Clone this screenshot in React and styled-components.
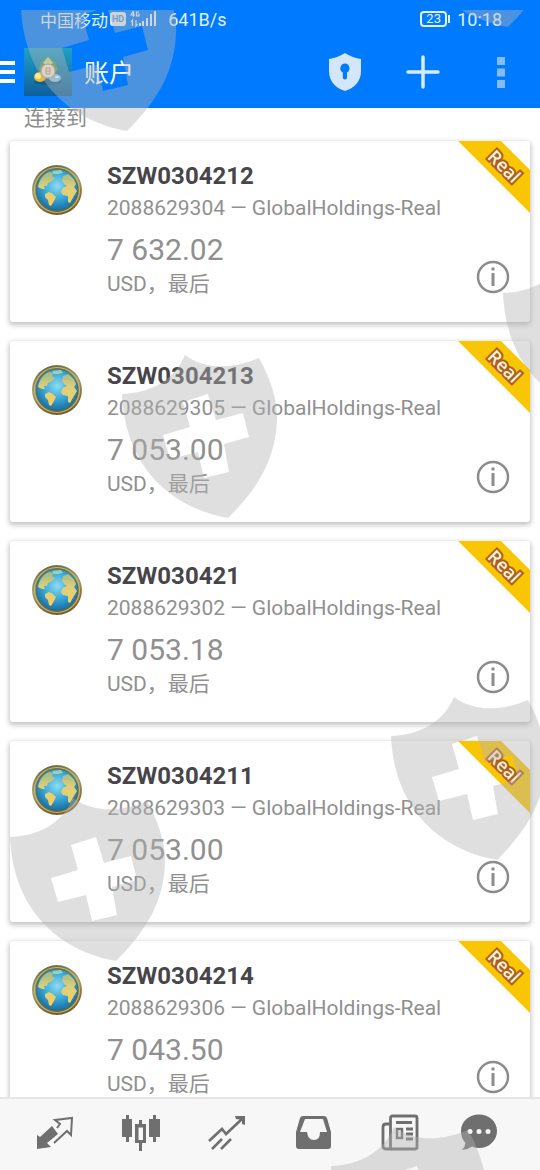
import styled, { createGlobalStyle } from "styled-components";

const GlobalStyle = createGlobalStyle`
  * {
    box-sizing: border-box;
  }
  body {
    margin: 0;
    background: #fff;
    font-family: Roboto, "Noto Sans CJK SC", sans-serif;
  }
  button {
    display: flex;
    align-items: center;
    justify-content: center;
    padding: 0;
    border: none;
    background: none;
    font: inherit;
    color: inherit;
    cursor: pointer;
  }
  svg {
    display: block;
  }
`;

const Screen = styled.div`
  position: relative;
  display: flex;
  flex-direction: column;
  height: 100vh;
  overflow: hidden;
`;

const TopBar = styled.header`
  flex: none;
  background: #007aff;
  color: #e3f0ff;
`;

const StatusBar = styled.div`
  display: flex;
  align-items: center;
  height: 38px;
  padding: 0 38px 0 40px;
  font-size: 18px;
  font-weight: 400;
`;

const Carrier = styled.span`
  font-size: 17px;
  margin-right: 2px;
`;

const HdBadge = styled.span`
  padding: 0 2px;
  margin-right: 4px;
  border-radius: 3px;
  background: #dcebfb;
  color: #4a90dc;
  font-size: 9px;
  font-weight: 700;
  line-height: 14px;
`;

const Speed = styled.span`
  margin-left: 12px;
`;

const Battery = styled.span`
  display: flex;
  align-items: center;
  margin-left: auto;
  margin-right: 7px;

  &::after {
    content: "";
    width: 2px;
    height: 8px;
    margin-left: 1px;
    background: currentColor;
  }
`;

const BatteryLevel = styled.span`
  width: 27px;
  border: 2px solid currentColor;
  border-radius: 4px;
  font-size: 13px;
  line-height: 12px;
  text-align: center;
`;

const Toolbar = styled.div`
  display: flex;
  align-items: center;
  height: 70px;
  padding: 0 19px 2px 0;
`;

const MenuButton = styled.button`
  width: 15px;
  height: 48px;
  margin-right: 9px;
`;

const Title = styled.h1`
  flex: 1;
  margin: 4px 0 0 12px;
  color: #fff;
  font-size: 25px;
  font-weight: 400;
  line-height: 32px;
`;

const Actions = styled.div`
  display: flex;
  gap: 38px;
`;

const IconButton = styled.button`
  width: 40px;
  height: 48px;
`;

const Main = styled.main`
  flex: 1;
  min-height: 0;
`;

const SectionTitle = styled.h2`
  margin: 0 24px 13px;
  color: #8d8d8d;
  font-size: 21px;
  font-weight: 400;
  line-height: 20px;
`;

const Accounts = styled.ul`
  display: flex;
  flex-direction: column;
  gap: 19px;
  margin: 0;
  padding: 0 10px;
  list-style: none;
`;

const Card = styled.li`
  position: relative;
  display: flex;
  gap: 25px;
  min-height: 181px;
  padding: 21px 20px 20px 22px;
  border-radius: 3px;
  background: #fff;
  box-shadow: 0 2px 5px 1px rgba(0, 0, 0, 0.24);
`;

const Globe = styled.svg`
  flex: none;
  width: 50px;
  height: 50px;
  margin-top: 3px;
`;

const Details = styled.div`
  flex: 1;
  color: #909090;
`;

const Name = styled.h3`
  margin: 0 0 6px;
  color: #46464a;
  font-size: 24px;
  font-weight: 700;
  line-height: 28px;
`;

const Server = styled.p`
  margin: 0 0 12px;
  font-size: 21px;
  line-height: 24px;
`;

const Balance = styled.p`
  margin: 0;
  font-size: 30px;
  line-height: 36px;
`;

const Currency = styled.p`
  margin: 0;
  font-size: 21px;
  line-height: 32px;
`;

const InfoButton = styled.button`
  align-self: flex-end;
  width: 34px;
  height: 34px;
  margin-bottom: 8px;
  color: #8c8c8c;
`;

const Ribbon = styled.div`
  position: absolute;
  top: 0;
  right: 0;
  display: flex;
  align-items: center;
  justify-content: center;
  width: 72px;
  height: 72px;
  padding: 0 0 22px 22px;
  background: #f9c606;
  clip-path: polygon(0 0, 43px 0, 100% 29px, 100% 100%);
`;

const RibbonText = styled.span`
  transform: rotate(45deg);
  color: #fff3e0;
  font-family: "Open Sans", sans-serif;
  font-size: 18px;
  font-weight: 600;
  line-height: 20px;
  -webkit-text-stroke: 4px #b0601c;
  paint-order: stroke fill;
`;

const TabBar = styled.nav`
  position: relative;
  flex: none;
  display: grid;
  grid-template-columns: repeat(6, 1fr);
  height: 73px;
  padding: 0 12px 6px;
  border-top: 2px solid #e6e6e6;
  background: #f7f7f7;
  color: #6f6f6f;
`;

const Watermarks = styled.div`
  position: absolute;
  inset: 10px 0 0;
  overflow: hidden;
  pointer-events: none;
`;

const Mark = styled.svg`
  position: absolute;
  left: ${(p) => p.$x}px;
  top: ${(p) => p.$y}px;
  width: 156px;
  height: 166px;
`;

const accounts = [
  { name: "SZW0304212", login: "2088629304", balance: "7 632.02" },
  { name: "SZW0304213", login: "2088629305", balance: "7 053.00" },
  { name: "SZW030421", login: "2088629302", balance: "7 053.18" },
  { name: "SZW0304211", login: "2088629303", balance: "7 053.00" },
  { name: "SZW0304214", login: "2088629306", balance: "7 043.50" },
];

const marks = [
  [21, -44],
  [402, -148],
  [503, 242],
  [122, 343],
  [391, 685],
  [10, 786],
  [331, 1115],
];

const tabs = [
  {
    label: "行情",
    icon: (
      <>
        <path fill="currentColor" d="M12 23V37L26 35L22 31L33 22L27 14L15 25Z" />
        <path
          fill="none"
          stroke="currentColor"
          strokeWidth="2"
          d="M32 16L35 12L30 8L47 6L46 23L42 19L29 31"
        />
      </>
    ),
  },
  {
    label: "图表",
    icon: (
      <>
        <path
          fill="currentColor"
          d="M15 3h3v4h3v18h-3v5h-3v-5h-4V7h4zM42 3h3v4h4v18h-4v5h-3v-5h-4V7h4z"
        />
        <path fill="currentColor" d="M28 8h3v4h4v19h-4v8h-3v-8h-4V12h4z" />
        <path fill="#f7f7f7" d="M27.5 15.5h4.5v12.5h-4.5z" />
      </>
    ),
  },
  {
    label: "交易",
    icon: (
      <>
        <path
          fill="none"
          stroke="currentColor"
          strokeWidth="2.6"
          d="M12 29L25 17L29 22L45 7M15 37L25 27M24 37L34 27"
        />
        <path fill="currentColor" d="M38 4H48V13L45 12V8L39 7Z" />
      </>
    ),
  },
  {
    label: "历史",
    icon: (
      <path
        fill="currentColor"
        fillRule="evenodd"
        d="M20 4H41Q43 4 44 6L48 20V34Q48 37 45 37H16Q13 37 13 34V20L17 6Q18 4 20 4ZM22 7L17 20H24Q25 28 31 28Q37 28 37 20H44L40 7Z"
      />
    ),
  },
  {
    label: "新闻",
    icon: (
      <g fill="none" stroke="currentColor" strokeWidth="2.8">
        <rect x="21.5" y="4" width="26.5" height="33" rx="2" />
        <path d="M21 12H17Q14 12 14 15V34Q14 37 17 37H23" />
        <path d="M27 10.500H43M37 17H44M37 22H44M37 27H44" />
        <rect x="28" y="17" width="5" height="9" strokeWidth="2.4" />
      </g>
    ),
  },
  {
    label: "消息",
    icon: (
      <>
        <path
          fill="currentColor"
          d="M24 2.5C34 2.5 42 9.5 42 19S34 36 24 36Q20 36 17 34.5Q12 38 7 38Q10 35 10.5 31C7.5 28 6 24 6 19C6 9.5 14 2.5 24 2.5Z"
        />
        <circle cx="15" cy="19.5" r="2.5" fill="#f7f7f7" />
        <circle cx="24" cy="19.5" r="2.5" fill="#f7f7f7" />
        <circle cx="33" cy="19.5" r="2.5" fill="#f7f7f7" />
      </>
    ),
  },
];

const Gradients = styled.svg`
  position: absolute;
`;

const GlobeDefs = () => (
  <Gradients width="0" height="0" aria-hidden="true">
    <defs>
      <radialGradient id="sea" cx="0.5" cy="0.4" r="0.6">
        <stop offset="0" stopColor="#8cdcf0" />
        <stop offset="0.55" stopColor="#35a5d6" />
        <stop offset="1" stopColor="#1a6a9c" />
      </radialGradient>
      <linearGradient id="rim" x1="0" y1="0" x2="0.3" y2="1">
        <stop offset="0" stopColor="#5f5a34" />
        <stop offset="0.5" stopColor="#a3a06c" />
        <stop offset="1" stopColor="#7a5c2a" />
      </linearGradient>
      <linearGradient id="land" x1="0" y1="0" x2="0" y2="1">
        <stop offset="0" stopColor="#9fb98a" />
        <stop offset="0.45" stopColor="#e0cf78" />
        <stop offset="1" stopColor="#f2cf62" />
      </linearGradient>
    </defs>
  </Gradients>
);

const GlobeIcon = () => (
  <Globe viewBox="0 0 50 50" aria-hidden="true">
    <circle cx="25" cy="25" r="25" fill="url(#rim)" />
    <circle cx="25" cy="25" r="22.5" fill="none" stroke="#c2b774" strokeWidth="1.2" />
    <circle cx="25" cy="25" r="21" fill="url(#sea)" stroke="#5b6f4a" />
    <path
      fill="url(#land)"
      d="M7 18Q10 10 17 7L22 8L20 11L23 13L20 16L16 18L15 21L12 21L13 24L10 24L6 22ZM13 29L17 27L21 29L24 32L22 36L19 41L17 40L16 35L13 32ZM31 11L36 9Q42 13 44 19L42 22L45 26L42 31L38 38L36 37L36 31L31 30L29 27L31 23L35 21L32 19L30 16Z"
    />
    <path fill="#d4ecb0" opacity="0.6" d="M20 6L29 5L31 8L26 9L22 9Z" />
  </Globe>
);

const AppLogo = () => (
  <svg width="48" height="48" viewBox="0 0 48 48" aria-hidden="true">
    <defs>
      <linearGradient id="logoBg" x1="0" y1="0" x2="0" y2="1">
        <stop offset="0" stopColor="#1fa0c8" />
        <stop offset="1" stopColor="#0f5f9c" />
      </linearGradient>
    </defs>
    <rect width="48" height="48" fill="url(#logoBg)" />
    <ellipse cx="24" cy="34" rx="14" ry="3" fill="#124f74" opacity="0.6" />
    <path fill="#5d9c48" d="M15 21Q17 12 24 9Q31 12 34 21L30 26L17 25Z" />
    <path fill="#c6dfa0" d="M19 15L24 9L29 15L24 18Z" />
    <ellipse cx="16" cy="29" rx="6" ry="5" fill="#e5b93c" />
    <ellipse cx="14" cy="28" rx="3" ry="3" fill="#fbe98c" />
    <ellipse cx="31" cy="30" rx="6" ry="4" fill="#8cc6ea" />
    <ellipse cx="33" cy="29" rx="2" ry="1" fill="#fff" />
    <circle cx="24" cy="23" r="7" fill="#f8ead8" stroke="#b79b7a" />
    <path fill="none" stroke="#c4906f" d="M22 20h4v6h-4zM22 23h4" />
  </svg>
);

const SignalIcon = () => (
  <svg width="26" height="18" viewBox="0 0 26 18" aria-hidden="true">
    <path
      fill="none"
      stroke="currentColor"
      strokeWidth="1.2"
      d="M3.5 1L1 5H5M3.5 1V7M9 2H6.5V6H9V4H8M2.5 16V10L1 12M6 10V16L7.5 14"
    />
    <path
      fill="currentColor"
      d="M9 13h2v3H9zM12 11h2v5h-2zM16 8h2v8h-2zM20 4h2v12h-2zM24 1h2v15h-2z"
    />
  </svg>
);

const AccountCard = ({ account }) => (
  <Card>
    <GlobeIcon />
    <Details>
      <Name>{account.name}</Name>
      <Server>{account.login} — GlobalHoldings-Real</Server>
      <Balance>{account.balance}</Balance>
      <Currency>USD，最后</Currency>
    </Details>
    <InfoButton aria-label={`${account.name} 信息`}>
      <svg width="34" height="34" viewBox="0 0 34 34">
        <circle cx="17" cy="17" r="15" fill="none" stroke="currentColor" strokeWidth="2.5" />
        <path fill="currentColor" d="M15.5 7.500h3v3h-3zM15.5 13h3v13h-3z" />
      </svg>
    </InfoButton>
    <Ribbon>
      <RibbonText>Real</RibbonText>
    </Ribbon>
  </Card>
);

const App = () => {
  return (
    <Screen>
      <GlobalStyle />
      <GlobeDefs />
      <TopBar>
        <StatusBar>
          <Carrier>中国移动</Carrier>
          <HdBadge>HD</HdBadge>
          <SignalIcon />
          <Speed>641B/s</Speed>
          <Battery>
            <BatteryLevel>23</BatteryLevel>
          </Battery>
          <span>10:18</span>
        </StatusBar>
        <Toolbar>
          <MenuButton aria-label="菜单">
            <svg width="15" height="22" viewBox="0 0 15 22">
              <path fill="#fff" d="M0 0h15v4H0zM0 9h15v4H0zM0 18h15v4H0z" />
            </svg>
          </MenuButton>
          <AppLogo />
          <Title>账户</Title>
          <Actions>
            <IconButton aria-label="安全">
              <svg width="34" height="38" viewBox="0 0 34 38">
                <path
                  fill="#d3e6fc"
                  fillRule="evenodd"
                  d="M17 0Q25 5 33 6V18C33 29 26 35 17 38C8 35 1 29 1 18V6Q9 5 17 0ZM17 10.5A4.8 4.8 0 0 0 14.8 19.5V25Q17 28 19 25V19.5A4.8 4.8 0 0 0 17 10.5Z"
                />
              </svg>
            </IconButton>
            <IconButton aria-label="添加">
              <svg width="34" height="34" viewBox="0 0 34 34">
                <path
                  fill="none"
                  stroke="#d9eaff"
                  strokeWidth="3.5"
                  strokeLinecap="round"
                  d="M17 2V32M2 17H32"
                />
              </svg>
            </IconButton>
            <IconButton aria-label="更多">
              <svg width="8" height="31" viewBox="0 0 8 31">
                <path fill="#84bcfb" d="M0 0h8v8H0zM0 11.5h8v8H0zM0 23h8v8H0z" />
              </svg>
            </IconButton>
          </Actions>
        </Toolbar>
      </TopBar>
      <Main>
        <SectionTitle>连接到</SectionTitle>
        <Accounts>
          {accounts.map((account) => (
            <AccountCard key={account.login} account={account} />
          ))}
        </Accounts>
      </Main>
      <TabBar>
        {tabs.map((tab) => (
          <button key={tab.label} aria-label={tab.label}>
            <svg width="60" height="40" viewBox="0 0 60 40">
              {tab.icon}
            </svg>
          </button>
        ))}
      </TabBar>
      <Watermarks aria-hidden="true">
        {marks.map(([x, y]) => (
          <Mark key={`${x}-${y}`} $x={x} $y={y} viewBox="0 0 156 166">
            <path
              fill="#b2b2b2"
              fillOpacity="0.42"
              fillRule="evenodd"
              d="M0 41C28 40 52 28 63 2C82 16 108 17 137 5C150 28 156 52 155 66C154 105 137 134 106 165C50 155 3 115 0 41ZM61 49L86 41L94 67L121 60L127 84L102 91L107 119L82 125L76 99L48 106L41 82L68 74Z"
            />
          </Mark>
        ))}
      </Watermarks>
    </Screen>
  );
};

export default App;
